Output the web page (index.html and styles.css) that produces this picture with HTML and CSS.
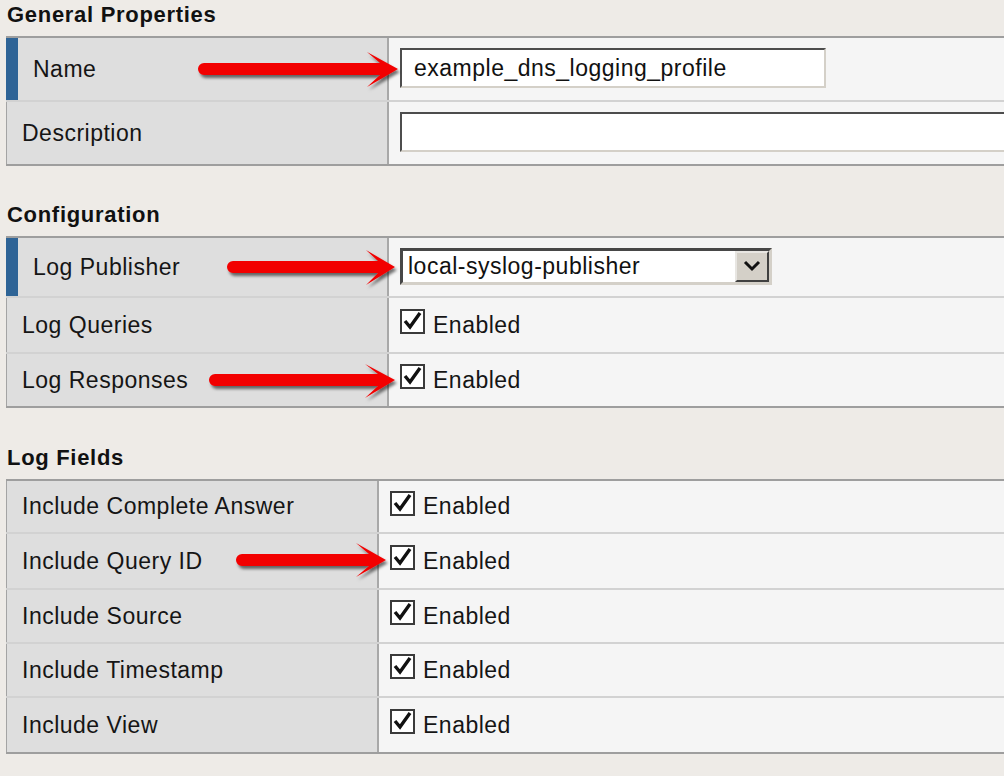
FILE: index.html
```html
<!DOCTYPE html>
<html>
<head>
<meta charset="utf-8">
<link rel="stylesheet" href="styles.css">
</head>
<body>
<div class="page">
  <h2 class="title">General Properties</h2>
  <div class="table">
    <div class="row h62">
      <div class="label mark">Name</div>
      <div class="value"><div class="input name-input">example_dns_logging_profile</div></div>
    </div>
    <div class="row h62">
      <div class="label">Description</div>
      <div class="value"><div class="input desc-input"></div></div>
    </div>
  </div>

  <h2 class="title sec2">Configuration</h2>
  <div class="table">
    <div class="row h58">
      <div class="label mark">Log Publisher</div>
      <div class="value">
        <div class="select">
          <span class="select-text">local-syslog-publisher</span>
          <span class="select-btn">
            <svg width="20" height="14" viewBox="0 0 20 14"><path d="M3 3 L10 10 L17 3" fill="none" stroke="#111" stroke-width="3"/></svg>
          </span>
        </div>
      </div>
    </div>
    <div class="row h54">
      <div class="label">Log Queries</div>
      <div class="value"><span class="check"><svg viewBox="0 0 21 21"><path d="M3 10 L8 16 L18 2" fill="none" stroke="#111" stroke-width="3.4"/></svg></span><span class="cb-text">Enabled</span></div>
    </div>
    <div class="row h52">
      <div class="label">Log Responses</div>
      <div class="value"><span class="check"><svg viewBox="0 0 21 21"><path d="M3 10 L8 16 L18 2" fill="none" stroke="#111" stroke-width="3.4"/></svg></span><span class="cb-text">Enabled</span></div>
    </div>
  </div>

  <h2 class="title sec3">Log Fields</h2>
  <div class="table t3">
    <div class="row h51">
      <div class="label">Include Complete Answer</div>
      <div class="value"><span class="check"><svg viewBox="0 0 21 21"><path d="M3 10 L8 16 L18 2" fill="none" stroke="#111" stroke-width="3.4"/></svg></span><span class="cb-text">Enabled</span></div>
    </div>
    <div class="row h54">
      <div class="label">Include Query ID</div>
      <div class="value"><span class="check"><svg viewBox="0 0 21 21"><path d="M3 10 L8 16 L18 2" fill="none" stroke="#111" stroke-width="3.4"/></svg></span><span class="cb-text">Enabled</span></div>
    </div>
    <div class="row h52">
      <div class="label">Include Source</div>
      <div class="value"><span class="check"><svg viewBox="0 0 21 21"><path d="M3 10 L8 16 L18 2" fill="none" stroke="#111" stroke-width="3.4"/></svg></span><span class="cb-text">Enabled</span></div>
    </div>
    <div class="row h52">
      <div class="label">Include Timestamp</div>
      <div class="value"><span class="check"><svg viewBox="0 0 21 21"><path d="M3 10 L8 16 L18 2" fill="none" stroke="#111" stroke-width="3.4"/></svg></span><span class="cb-text">Enabled</span></div>
    </div>
    <div class="row h54">
      <div class="label">Include View</div>
      <div class="value"><span class="check"><svg viewBox="0 0 21 21"><path d="M3 10 L8 16 L18 2" fill="none" stroke="#111" stroke-width="3.4"/></svg></span><span class="cb-text">Enabled</span></div>
    </div>
  </div>

  <svg class="arrows" width="1004" height="776" viewBox="0 0 1004 776">
    <defs>
      <filter id="sh" x="-10%" y="-50%" width="120%" height="200%">
        <feDropShadow dx="2" dy="3" stdDeviation="1.8" flood-color="#000" flood-opacity="0.55"/>
      </filter>
    </defs>
    <g fill="#f20000" filter="url(#sh)">
      <path d="M204 63 L380 63 L367 52 L398 69 L367 87 L380 75 L204 75 A6 6 0 0 1 204 63 Z"/>
      <path d="M233 261 L378 261 L366 250 L395 267 L366 285 L378 273 L233 273 A6 6 0 0 1 233 261 Z"/>
      <path d="M215 374 L378 374 L365 364 L395 380 L365 398 L378 386 L215 386 A6 6 0 0 1 215 374 Z"/>
      <path d="M242 554 L369 554 L356 543 L386 560 L356 577 L369 566 L242 566 A6 6 0 0 1 242 554 Z"/>
    </g>
  </svg>
</div>
</body>
</html>
```

FILE: styles.css
```css
body {
  margin: 0;
  background: #eeebe7;
  font-family: "Liberation Sans", Arial, sans-serif;
  color: #111;
  overflow: hidden;
}

.page {
  position: relative;
  width: 1004px;
  height: 776px;
  overflow: hidden;
}

.title {
  margin: 0;
  height: 36px;
  line-height: 30px;
  padding-left: 7px;
  font-size: 22px;
  font-weight: bold;
  letter-spacing: 0.7px;
  color: #111;
}

.sec2 { margin-top: 34px; }
.sec3 { margin-top: 35px; }

.table {
  margin-left: 6px;
  margin-right: -40px;
  border-top: 2px solid #9e9e9e;
  border-bottom: 2px solid #9e9e9e;
}

.row {
  display: flex;
}

.row + .row {
  border-top: 2px solid #d2d2d2;
}

.h62 { height: 62px; }
.h58 { height: 58px; }
.h54 { height: 54px; }
.h52 { height: 52px; }
.h51 { height: 51px; }

.label {
  box-sizing: border-box;
  width: 383px;
  flex: none;
  background: #dedede;
  border-left: 1px solid #a4a4a4;
  border-right: 2px solid #a8a8a8;
  padding-left: 15px;
  display: flex;
  align-items: center;
  font-size: 23px;
  letter-spacing: 0.5px;
  color: #151515;
}

.label.mark {
  border-left: 12px solid #2f6496;
}

.t3 .label {
  width: 373px;
}

.value {
  flex: 1;
  background: #f5f5f5;
  display: flex;
  align-items: center;
  padding-left: 11px;
}

.input {
  box-sizing: border-box;
  height: 40px;
  background: #fff;
  border: 2px solid;
  border-color: #4d4d4d #d4d0c8 #d4d0c8 #4d4d4d;
  padding-left: 12px;
  display: flex;
  align-items: center;
  font-size: 23px;
  letter-spacing: 0.5px;
  margin-bottom: 2px;
}

.name-input { width: 426px; }
.desc-input { width: 700px; }

.select {
  box-sizing: border-box;
  width: 372px;
  height: 37px;
  background: #fff;
  border: 3px solid;
  border-color: #474747 #d4d0c8 #d4d0c8 #474747;
  display: flex;
  align-items: center;
  padding-left: 5px;
  margin-bottom: 2px;
}

.select-text {
  flex: 1;
  font-size: 23px;
  letter-spacing: 0.5px;
}

.select-btn {
  box-sizing: border-box;
  width: 34px;
  height: 31px;
  background: #d4d0c8;
  border: 2px solid;
  border-color: #e8e6e2 #404040 #404040 #e8e6e2;
  display: flex;
  align-items: center;
  justify-content: center;
}

.check {
  box-sizing: border-box;
  width: 25px;
  height: 25px;
  border: 2px solid #3a3a3a;
  background: #fff;
  display: flex;
  margin-bottom: 7px;
  flex: none;
}

.check svg {
  width: 21px;
  height: 21px;
}

.cb-text {
  margin-left: 8px;
  font-size: 23px;
  letter-spacing: 0.5px;
  color: #151515;
}

.arrows {
  position: absolute;
  left: 0;
  top: 0;
  pointer-events: none;
}
```
